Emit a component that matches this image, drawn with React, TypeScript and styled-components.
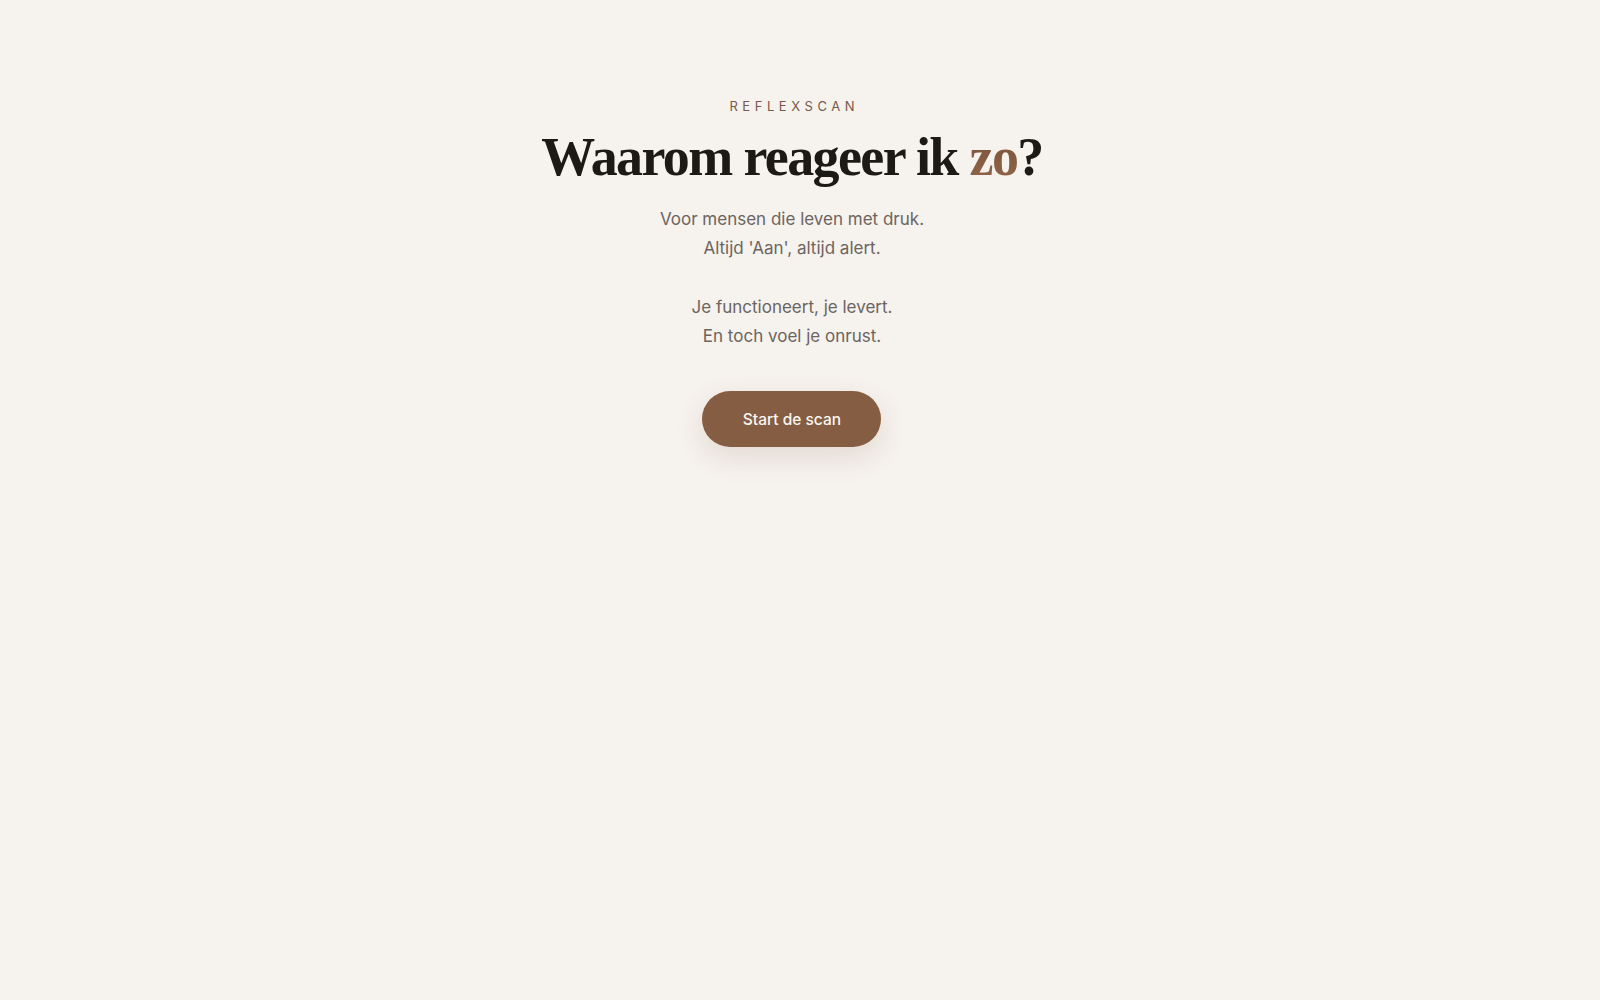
import styled, { createGlobalStyle } from 'styled-components';

const GlobalStyle = createGlobalStyle`
  html, body {
    margin: 0;
    padding: 0;
    background: #f6f2ee;
  }
  body {
    font-family: Inter, "Noto Sans", sans-serif;
  }
`

function App() {
  return (
    <>
      <GlobalStyle />
      <StPage>
        <StHero>
          <StEyebrow>Reflexscan</StEyebrow>
          <StTitle>
            Waarom reageer ik <StAccent>zo</StAccent>?
          </StTitle>
          <StIntro>
            Voor mensen die leven met druk.
            <br />
            Altijd 'Aan', altijd alert.
          </StIntro>
          <StIntro>
            Je functioneert, je levert.
            <br />
            En toch voel je onrust.
          </StIntro>
          <StButton type="button">Start de scan</StButton>
        </StHero>
      </StPage>
    </>
  )
}

export default App

const StPage = styled.main`
  min-height: 100vh;
  box-sizing: border-box;
  padding-right: 16px;
  background: #f6f2ee;
  display: flex;
  justify-content: center;
`

const StHero = styled.section`
  display: flex;
  flex-direction: column;
  align-items: center;
  text-align: center;
  padding-top: 97px;
`

const StEyebrow = styled.div`
  font-size: 13px;
  letter-spacing: 0.35em;
  text-transform: uppercase;
  color: #76594a;
  line-height: 18px;
  margin-right: -0.35em;
`

const StTitle = styled.h1`
  font-family: "Liberation Serif", "DejaVu Serif", serif;
  font-weight: 700;
  font-size: 54px;
  line-height: 62px;
  letter-spacing: -0.03em;
  color: #1c1a17;
  margin: 11px 0 17px;
`

const StAccent = styled.span`
  background: linear-gradient(180deg, #74503a 0%, #93674a 100%);
  -webkit-background-clip: text;
  background-clip: text;
  color: transparent;
`

const StIntro = styled.p`
  font-size: 17px;
  line-height: 29px;
  color: #6b6560;
  margin: 0 0 30px;
`

const StButton = styled.button`
  margin-top: 10px;
  width: 179px;
  height: 56px;
  border: none;
  border-radius: 999px;
  background: #855d42;
  color: #fbf6f1;
  font-family: Inter, "Noto Sans", sans-serif;
  font-size: 15.5px;
  font-weight: 500;
  cursor: pointer;
  box-shadow: 0 10px 28px rgba(133, 93, 66, 0.16);
`
